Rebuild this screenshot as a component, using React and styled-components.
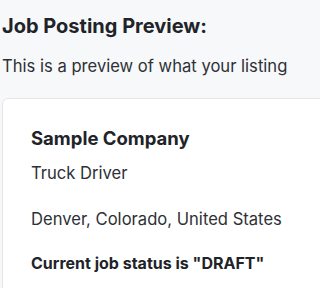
import React from "react";
import styled, { createGlobalStyle } from "styled-components";

const Global = createGlobalStyle`
  html, body { margin: 0; padding: 0; background: #f7f8fa; overflow: hidden; }
  body { font-family: Inter, "Noto Sans", sans-serif; color: #1f2328; }
`;

const Page = styled.div`
  overflow: hidden;
  padding: 14px 0 0 2px;
`;

const Title = styled.h1`
  margin: 0;
  font-size: 20px;
  line-height: 24px;
  font-weight: 700;
  color: #202328;
  white-space: nowrap;
`;

const Subtitle = styled.p`
  margin: 16px 0 0;
  font-size: 16.6px;
  line-height: 24px;
  color: #2e3136;
  white-space: nowrap;
`;

const Card = styled.section`
  margin: 20px -12px 0 0;
  background: #ffffff;
  border: 1px solid #e3e5e8;
  border-radius: 6px;
  padding: 27px 28px 28px;
`;

const Company = styled.h2`
  margin: 0;
  font-size: 18.5px;
  line-height: 24px;
  font-weight: 700;
  color: #202328;
  white-space: nowrap;
`;

const Line = styled.p`
  margin: ${(p) => p.$gap}px 0 0;
  font-size: ${(p) => (p.$bold ? 16 : 16.6)}px;
  line-height: 24px;
  font-weight: ${(p) => (p.$bold ? 700 : 400)};
  color: ${(p) => (p.$bold ? "#202328" : "#2e3136")};
  white-space: nowrap;
`;

export default function App() {
  return (
    <>
      <Global />
      <Page>
        <Title>Job Posting Preview:</Title>
        <Subtitle>This is a preview of what your listing</Subtitle>
        <Card>
          <Company>Sample Company</Company>
          <Line $gap={11}>Truck Driver</Line>
          <Line $gap={22}>Denver, Colorado, United States</Line>
          <Line $gap={20} $bold>Current job status is "DRAFT"</Line>
        </Card>
      </Page>
    </>
  );
}
